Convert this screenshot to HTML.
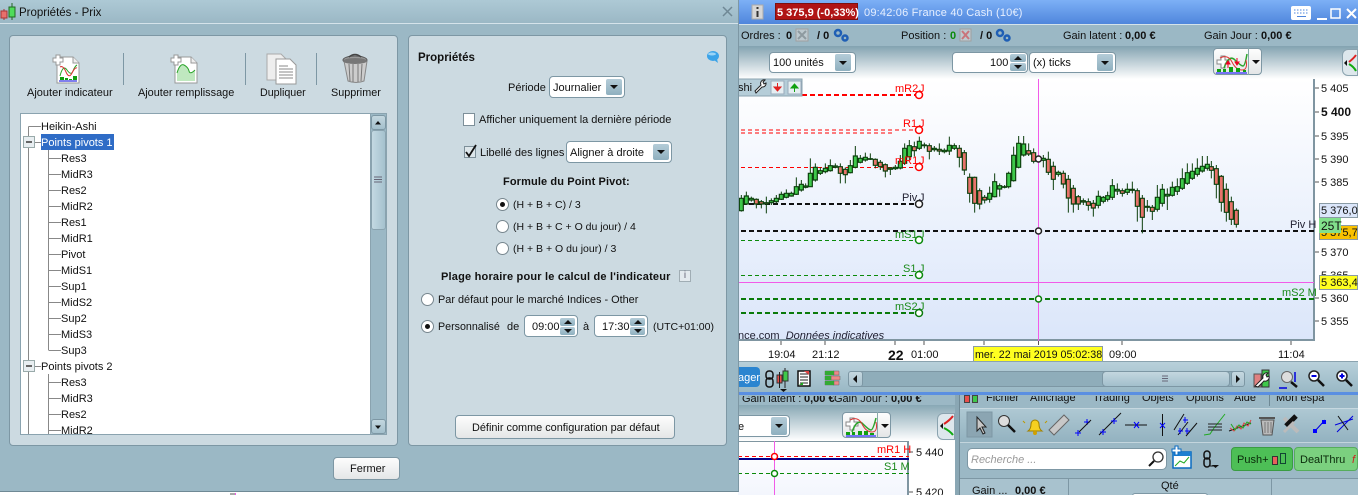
<!DOCTYPE html>
<html lang="fr"><head><meta charset="utf-8"><title>Propriétés - Prix</title>
<style>
html,body{margin:0;padding:0;background:#fff}
#r{position:relative;width:1358px;height:495px;overflow:hidden;font:11px/13px "Liberation Sans",sans-serif;color:#111}
#r div,#r span{position:absolute;box-sizing:border-box}
.t{white-space:nowrap;line-height:13px;margin-top:3px}
.b{font-weight:bold}
.panel{background:#ccdae1;border:1px solid #7d97a4;border-radius:4px}
.sel{background:#fff;border:1px solid #7d97a4;border-radius:4px}
.ab{background:linear-gradient(#b4ccd8,#8fb0bf);border-radius:2px}
.ab:after{content:"";position:absolute;left:50%;top:50%;margin:-2px 0 0 -4px;border:4px solid transparent;border-top:4px solid #111;border-bottom:0}
.ab.up:after{border-top:0;border-bottom:4px solid #111}
.cb{background:#fff;border:1px solid #7d8f99}
.ra{width:13px;height:13px;border-radius:50%;background:#fff;border:1px solid #77868e}
.ra.on:after{content:"";position:absolute;left:3px;top:3px;width:5px;height:5px;border-radius:50%;background:#111}
.btn{background:linear-gradient(#fdfdfd,#e4e6e7);border:1px solid #7d97a4;border-radius:4px;text-align:center}
svg{position:absolute;left:0;top:0}
</style></head><body><div id="r">

<!-- Right app background -->
<div style="left:738px;top:0;width:620px;height:24px;background:linear-gradient(#7db0f6,#4f86dc)"></div>
<div style="left:738px;top:24px;width:620px;height:22px;background:#9bb8c5;border-top:1px solid #d5e3ea"></div>
<div style="left:738px;top:46px;width:620px;height:33px;background:linear-gradient(#83a3b1,#fff)"></div>
<div style="left:738px;top:79px;width:577px;height:262px;background:linear-gradient(#fff,#dbe6fa);border-right:2px solid #7f95a1;border-bottom:2px solid #7f95a1"></div>
<div style="left:1315px;top:79px;width:43px;height:262px;background:#fff"></div>
<div style="left:738px;top:341px;width:620px;height:21px;background:#fff"></div>
<div style="left:738px;top:361px;width:620px;height:31px;background:linear-gradient(#b8d0da,#9ab8c5);border-top:1px solid #8aa3af"></div>
<div style="left:738px;top:392px;width:620px;height:3px;background:#5a8fe2"></div>
<div style="left:738px;top:395px;width:217px;height:10px;background:#9bb8c5"></div>
<div style="left:738px;top:405px;width:217px;height:36px;background:linear-gradient(#88a8b5,#fff)"></div>
<div style="left:738px;top:441px;width:171px;height:54px;background:linear-gradient(#fff,#f3f6fd);border-right:2px solid #7f95a1;border-top:1px solid #7f95a1"></div>
<div style="left:909px;top:441px;width:46px;height:54px;background:#fff"></div>
<div style="left:955px;top:395px;width:5px;height:100px;background:#8aa7b4;border-right:1px solid #6f8995"></div>
<div style="left:960px;top:395px;width:398px;height:13px;background:#9bb8c5"></div>
<div style="left:960px;top:408px;width:398px;height:34px;background:linear-gradient(#aec8d3,#93b2c0);border-top:1px solid #c6d8e0"></div>
<div style="left:960px;top:442px;width:398px;height:36px;background:#9bb8c5;border-top:1px solid #c3d5dd"></div>
<div style="left:960px;top:478px;width:398px;height:17px;background:#a8c2ce;border-top:1px solid #7d97a4"></div>

<div class="btn" style="left:842px;top:412px;width:49px;height:26px"></div>
<div style="left:877px;top:412px;width:1px;height:26px;background:#8aa"></div>
<div style="left:937px;top:413px;width:18px;height:27px;background:#dde7ec;border:1px solid #8aa3af;border-radius:6px 0 0 6px"></div>
<div class="btn" style="left:1213px;top:48px;width:49px;height:27px"></div><div style="left:1248px;top:48px;width:1px;height:27px;background:#8aa"></div>
<div style="left:1342px;top:49px;width:16px;height:27px;background:#dde7ec;border:1px solid #8aa3af;border-radius:6px 0 0 6px"></div>

<!-- Chart graphics -->
<svg width="1358" height="495" viewBox="0 0 1358 495">
<g fill="none">
<path d="M802 95H919" stroke="#f00" stroke-width="2" stroke-dasharray="5 3"/>
<path d="M741 130H919M741 133H895" stroke="#f00" stroke-dasharray="4 3"/>
<path d="M741 167.500H919" stroke="#f00" stroke-dasharray="4 3"/>
<path d="M741 204H919" stroke="#111" stroke-width="2" stroke-dasharray="5 3"/>
<path d="M741 240.500H919" stroke="#0a8a0a" stroke-dasharray="4 3"/>
<path d="M741 275.500H919" stroke="#0a8a0a" stroke-dasharray="4 3"/>
<path d="M741 313H919" stroke="#0a7a0a" stroke-width="2" stroke-dasharray="5 3"/>
<path d="M738 282.500H1314" stroke="#f15be8"/>
<path d="M741 299H1314" stroke="#0a7a0a" stroke-width="2" stroke-dasharray="5 3"/>
<path d="M1038.500 79V341" stroke="#f15be8"/>
<path d="M741 231H1314" stroke="#111" stroke-width="2" stroke-dasharray="5 3"/>
<g transform="translate(738 80) scale(.33333)">
<path stroke="#0d3f0d" stroke-width="3" d="M10 345V395M25 335V375M40 350V365M55 355V385M70 360V385M85 350V400M100 355V375M115 345V370M130 335V360M145 328V355M160 335V350M175 292V345M190 300V335M203 310V325M217 235V320M232 250V305M247 262V285M262 250V280M277 238V275M292 250V265M307 250V310M322 262V310M337 240V280M352 198V265M367 225V250M382 218V245M397 220V240M412 235V265M427 240V270M442 250V292M457 262V285M472 255V270M487 225V268M500 190V255M514 180V240M529 185V230M544 170V210M559 188V205M574 190V238M589 198V215M604 190V225M619 205V220M634 170V225M649 190V210M664 195V262M679 210V285M695 280V368M710 290V398M725 325V388M740 345V370M755 320V368M770 280V352M785 310V350M800 315V325M812 275V325M827 200V305M842 168V265M857 168V230M872 190V228M887 205V250"/>
<path fill="#3ec84a" stroke="#0d3f0d" stroke-width="3.500" d="M4 355h12v37h-12zM19 348h12v24h-12zM34 355h12v5h-12zM94 362h12v6h-12zM109 355h12v10h-12zM124 343h12v15h-12zM139 340h12v12h-12zM154 340h12v8h-12zM169 320h12v23h-12zM184 313h12v17h-12zM197 318h12v4h-12zM211 280h12v40h-12zM226 262h12v38h-12zM241 272h12v8h-12zM256 265h12v10h-12zM271 257h12v15h-12zM286 258h12v4h-12zM331 257h12v21h-12zM346 228h12v34h-12zM361 235h12v12h-12zM376 232h12v8h-12zM391 236h12v2h-12zM451 264h12v4h-12zM466 262h12v4h-12zM481 244h12v20h-12zM494 205h12v45h-12zM508 197h12v33h-12zM538 184h12v21h-12zM553 195h12v2h-12zM583 205h12v4h-12zM613 211h12v4h-12zM628 196h12v17h-12zM643 197h12v8h-12zM749 340h12v18h-12zM764 305h12v45h-12zM779 317h12v10h-12zM794 320h12v2h-12zM806 280h12v40h-12zM821 226h12v76h-12zM836 190h12v72h-12zM851 192h12v33h-12z"/>
<path fill="#e8736b" stroke="#0d3f0d" stroke-width="3.500" d="M49 358h12v14h-12zM64 365h12v7h-12zM79 368h12v4h-12zM301 260h12v20h-12zM316 268h12v16h-12zM406 238h12v18h-12zM421 247h12v13h-12zM436 254h12v19h-12zM523 200h12v12h-12zM568 197h12v17h-12zM598 208h12v5h-12zM658 205h12v27h-12zM673 218h12v52h-12zM689 292h12v48h-12zM704 292h12v78h-12zM719 332h12v40h-12zM734 352h12v8h-12zM866 212h12v10h-12zM881 218h12v26h-12z"/>
</g>
<g transform="translate(1040 80) scale(.33333)">
<path stroke="#0d3f0d" stroke-width="3" d="M10 225V262M25 215V285M40 245V330M55 272V290M70 272V325M85 285V398M100 315V398M115 345V390M130 355V375M145 355V392M160 360V410M175 332V385M190 348V370M203 335V365M217 297V360M232 310V345M247 325V350M262 310V345M277 305V340M292 325V425M307 345V460M322 360V395M337 375V420M352 315V395M367 312V380M382 325V390M397 305V350M412 295V345M427 265V330M442 250V315M457 250V300M472 235V290M487 228V278M502 228V272M514 243V295M529 255V355M544 285V395M559 310V425M574 350V435M589 385V443"/>
<path fill="#3ec84a" stroke="#0d3f0d" stroke-width="3.500" d="M4 235h12v6h-12zM49 277h12v6h-12zM169 349h12v27h-12zM184 352h12v12h-12zM197 347h12v11h-12zM211 317h12v35h-12zM226 328h12v5h-12zM256 328h12v9h-12zM271 328h12v3h-12zM346 352h12v36h-12zM361 328h12v42h-12zM376 343h12v5h-12zM391 322h12v24h-12zM406 320h12v14h-12zM421 296h12v29h-12zM436 278h12v32h-12zM451 274h12v21h-12zM466 265h12v18h-12zM481 259h12v14h-12zM496 253h12v12h-12zM316 379h12v3h-12z"/>
<path fill="#e8736b" stroke="#0d3f0d" stroke-width="3.500" d="M19 238h12v39h-12zM34 259h12v39h-12zM64 280h12v32h-12zM79 298h12v56h-12zM94 325h12v47h-12zM109 350h12v22h-12zM124 362h12v4h-12zM139 365h12v11h-12zM154 370h12v14h-12zM241 332h12v8h-12zM286 332h12v47h-12zM301 355h12v57h-12zM331 382h12v12h-12zM508 260h12v11h-12zM523 266h12v47h-12zM538 289h12v78h-12zM553 328h12v69h-12zM568 365h12v53h-12zM583 391h12v42h-12z"/>
</g>
<g stroke-width="1.500" fill="#fff">
<circle cx="919" cy="95" r="3.500" stroke="#f00"/><circle cx="919" cy="130" r="3.500" stroke="#f00"/><circle cx="919" cy="167" r="3.500" stroke="#f00"/>
<circle cx="919" cy="204" r="3.500" stroke="#222"/><circle cx="919" cy="240" r="3.500" stroke="#0a8a0a"/><circle cx="919" cy="275" r="3.500" stroke="#0a8a0a"/><circle cx="919" cy="313" r="3.500" stroke="#0a7a0a"/>
<circle cx="1038.500" cy="231" r="3" stroke="#222"/><circle cx="1038.500" cy="299" r="3" stroke="#0a7a0a"/><circle cx="1038.500" cy="159" r="3" stroke="#222"/>
</g>
<path d="M1315 88h4M1315 112h4M1315 136h4M1315 159h4M1315 182h4M1315 252h4M1315 298h4M1315 321h4M781 341v4M825 341v4M895 341v4M924 341v4M984 341v4M1038.500 341v4M1122 341v4M1291 341v4" stroke="#555"/>
<path d="M738 456.500H909" stroke="#f00" stroke-dasharray="4 3"/>
<path d="M738 459H909" stroke="#00008b" stroke-width="2"/>
<path d="M738 473.500H909" stroke="#0a8a0a" stroke-dasharray="4 3"/>
<path d="M774.500 441V495" stroke="#f15be8"/>
<circle cx="774.500" cy="456.500" r="3" fill="#fff" stroke="#f00" stroke-width="1.500"/>
<circle cx="774.500" cy="473.500" r="3" fill="#fff" stroke="#0a8a0a" stroke-width="1.500"/>
<path d="M909 452h4M909 492h4" stroke="#555"/>
</g>

<!-- top icons -->
<rect x="752" y="5" width="11" height="14" fill="#d6d6d6" stroke="#aaa"/><path d="M757.500 7v2M757.500 11v6" stroke="#333" stroke-width="2"/>
<rect x="1291" y="6" width="20" height="14" rx="2" fill="#fff"/><path d="M1294 10h14M1294 13h14" stroke="#4f86dc" stroke-width=".9" stroke-dasharray="1.500 1.500"/><path d="M1297 16.500h9" stroke="#4f86dc"/>
<path d="M1317 19h10" stroke="#fff" stroke-width="2"/><rect x="1331" y="9" width="9" height="9" fill="none" stroke="#fff" stroke-width="1.500"/><path d="M1347 9l9 9M1356 9l-9 9" stroke="#fff" stroke-width="2"/>
<rect x="796" y="29" width="12" height="12" fill="#bdc9cf" stroke="#a0a0a0"/><path d="M798 31l8 8M806 31l-8 8" stroke="#8e9aa0" stroke-width="2"/>
<rect x="960" y="29" width="11" height="12" fill="#bdc9cf" stroke="#a0a0a0"/><path d="M962 31l7 8M969 31l-7 8" stroke="#c9747b" stroke-width="2"/>
<g fill="#9bb8c5" stroke="#1f5fb5" stroke-width="2.500"><circle cx="838" cy="33" r="3"/><circle cx="845" cy="38" r="2.500"/><circle cx="1000" cy="33" r="3"/><circle cx="1007" cy="38" r="2.500"/></g>
<!-- tab -->
<rect x="738" y="79" width="64" height="17" fill="#b5cdd8" stroke="#8aa3af"/>
<path d="M756 93l6-6a3.500 3.500 0 0 1 4-5l-2 2 1 2 2-1a3.500 3.500 0 0 1-4 4l-6 6z" fill="#fff" stroke="#222" transform="translate(-1 -2)"/>
<rect x="771" y="81" width="13" height="13" fill="#e5eef2" stroke="#9ab"/><path d="M777.500 83v5M774 87h7l-3.500 4z" fill="#e02020" stroke="#e02020"/>
<rect x="788" y="81" width="13" height="13" fill="#e5eef2" stroke="#9ab"/><path d="M794.500 92v-5M791 88h7l-3.500-4z" fill="#10a010" stroke="#10a010"/>
</svg>

<!-- Right header text -->
<div style="left:775px;top:3px;width:83px;height:17px;background:#b01414;border:1px solid #7c1010"></div>
<span class="t b" style="left:777px;top:4px;color:#fff;font-size:11px">5 375,9 (-0,33%)</span>
<span class="t" style="left:864px;top:4px;color:#e6efff;font-size:11px;letter-spacing:.2px">09:42:06 France 40 Cash (10€)</span>
<span class="t" style="left:741px;top:27px">Ordres :</span><span class="t b" style="left:786px;top:27px">0</span><span class="t b" style="left:817px;top:27px">/ 0</span>
<span class="t" style="left:901px;top:27px">Position :</span><span class="t b" style="left:950px;top:27px;color:#0a8a0a">0</span><span class="t b" style="left:980px;top:27px">/ 0</span>
<span class="t" style="left:1063px;top:27px">Gain latent :</span><span class="t b" style="left:1125px;top:27px">0,00 €</span>
<span class="t" style="left:1204px;top:27px">Gain Jour :</span><span class="t b" style="left:1261px;top:27px">0,00 €</span>

<div class="sel" style="left:769px;top:52px;width:87px;height:21px"></div><span class="t" style="left:773px;top:54px">100 unités</span><div class="ab" style="left:835px;top:54px;width:16px;height:17px"></div>
<div class="sel" style="left:952px;top:52px;width:76px;height:21px"></div><span class="t" style="left:990px;top:54px">100</span><div class="ab up" style="left:1010px;top:54px;width:16px;height:8px"></div><div class="ab" style="left:1010px;top:63px;width:16px;height:8px"></div>
<div class="sel" style="left:1029px;top:52px;width:87px;height:21px"></div><span class="t" style="left:1033px;top:54px">(x) ticks</span><div class="ab" style="left:1097px;top:54px;width:16px;height:17px"></div>

<svg width="1358" height="495" viewBox="0 0 1358 495">
<path d="M1217 60h4v-4h4v4h4v4h-4v4h-4v-4h-4z" fill="#fff" stroke="#888"/>
<path d="M1224 68q5-14 11-8t8 6 4-12" fill="none" stroke="#2ca52c" stroke-width="1.500"/><path d="M1220 58q8-4 12 4t10 8 4-10" fill="none" stroke="#d33"/>
<path d="M1217 72h4v-3h-4zM1223 72h3v-3h-3zM1229 72h4v-5h-4zM1236 72h4v-4h-4zM1243 72h3v-2h-3z" fill="#10a010"/>
<path d="M1216 73h31" stroke="#00f"/><path d="M1228 68v-6M1226 64h4l-2-3zM1237 58v6M1235 62h4l-2 3z" fill="#e02" stroke="#e02"/>
<path d="M1252 60h8l-4 4z" fill="#111"/>
<path d="M1349 62q5-4 7-7" stroke="#d22" stroke-width="2" fill="none"/><path d="M1349 64q5 3 7 7" stroke="#1a1" stroke-width="2" fill="none"/>
<path d="M1344 63l3-3v6z" fill="#111"/>
<!-- lower-row round button arrows -->
<path d="M944 424q6-4 9-8" stroke="#d22" stroke-width="2" fill="none"/><path d="M944 428q6 3 9 7" stroke="#1a1" stroke-width="2" fill="none"/><path d="M940 426l3-3v6z" fill="#111"/>
<!-- bottom toolbar icons -->
<g fill="none" stroke="#111" stroke-width="1.500">
<rect x="766" y="371" width="7" height="8" rx="3"/><rect x="766" y="378" width="7" height="9" rx="3"/>
</g>
<rect x="777" y="375" width="5" height="8" fill="#e8504c" stroke="#333"/><path d="M779.500 372v16M785 368v20" stroke="#222"/><rect x="783" y="371" width="5" height="10" fill="#3ec84a" stroke="#333"/><path d="M780 389h7l-3.500 3z" fill="#111"/>
<rect x="798" y="371" width="12" height="15" fill="#fff" stroke="#111" stroke-width="1.500"/><path d="M800 374h8M800 377h8M800 380h8M800 383h8" stroke="#222"/><path d="M804 371h5v4z" fill="#d44"/><path d="M799 385l4-3v3z" fill="#2a2"/>
<path d="M825 371h9v4h-9zM833 371h6v4h-6zM825 376h6v4h-6zM831 376h9v4h-9zM825 381h9v4h-9zM833 381h6v4h-6z" fill="#e88" stroke="#666" stroke-width=".5"/>
<path d="M825 371h9v4h-9zM825 381h9v4h-9zM825 376h6v4h-6z" fill="#3a3"/>
<rect x="1254" y="374" width="7" height="13" fill="#e08080" stroke="#555"/><rect x="1262" y="370" width="7" height="17" fill="#3ec84a" stroke="#333"/><path d="M1255 386l8-8a4 4 0 0 1 5-5l-2 2 1 2 2-1a4 4 0 0 1-5 5l-6 6z" fill="#fff" stroke="#222"/>
<circle cx="1287" cy="377" r="5.500" fill="#ddd" stroke="#666"/><path d="M1291 382l6 5" stroke="#111" stroke-width="2.500"/><path d="M1295 372v10M1279 388h8" stroke="#00d" stroke-width="1.500"/>
<circle cx="1314" cy="376" r="5" fill="#fff" stroke="#222" stroke-width="1.500"/><path d="M1311.500 376h5" stroke="#00d" stroke-width="2"/><path d="M1318 380l6 6" stroke="#111" stroke-width="2.500"/>
<circle cx="1342" cy="376" r="5" fill="#fff" stroke="#222" stroke-width="1.500"/><path d="M1339.500 376h5M1342 373.500v5" stroke="#00d" stroke-width="2"/><path d="M1346 380l6 6" stroke="#111" stroke-width="2.500"/>
<!-- lower indicator -->
<path d="M846 422h4v-4h4v4h4v4h-4v4h-4v-4h-4z" fill="#fff" stroke="#888"/>
<path d="M852 432q5-14 11-8t8 6 5-12" fill="none" stroke="#2ca52c" stroke-width="1.500"/><path d="M850 420q8-4 12 4t10 8 4-10" fill="none" stroke="#d33"/>
<path d="M846 435h4v-3h-4zM852 435h3v-3h-3zM858 435h4v-4h-4zM864 435h4v-4h-4zM870 435h4v-2h-4z" fill="#10a010"/><path d="M846 436h30" stroke="#00f"/>
<path d="M881 424h8l-4 4z" fill="#111"/>
<!-- right-panel icons -->
<rect x="967" y="412" width="25" height="25" fill="#8ba5b2" stroke="#7d97a4"/><path d="M977 417l0 14 3-3 3 6 2-1-3-6h4z" fill="#c8c8c8" stroke="#222"/>
<circle cx="1004" cy="421" r="5.500" fill="#ddd" stroke="#333"/><path d="M1008 425l7 7" stroke="#111" stroke-width="2.500"/>
<path d="M1028 431q3-2 3-7a4 4 0 0 1 8 0q0 5 3 7z" fill="#f5d020" stroke="#a08000"/><circle cx="1035" cy="433" r="2" fill="#d0a000"/><path d="M1023 421l2 2M1047 421l-2 2" stroke="#b90"/>
<path d="M1049 430l15-15 5 5-15 15z" fill="#c8c8c8" stroke="#666"/>
<path d="M1075 433h6M1078 430v6M1084 422h6M1087 419v6" stroke="#00f" fill="none"/><path d="M1079 432l12-12" stroke="#111"/>
<path d="M1099 435l22-22" stroke="#111"/><path d="M1100 432h6M1103 429v6M1111 421h6M1114 418v6" stroke="#00f"/>
<path d="M1125 425h22" stroke="#111"/><path d="M1134 422l5 6M1139 422l-5 6" stroke="#00f"/>
<path d="M1162.500 414v22" stroke="#111"/><path d="M1160 423l5 5M1165 423l-5 5" stroke="#00f"/>
<path d="M1184 414l-10 16M1188 422l-10 13M1197 423l-11 13" stroke="#111"/><path d="M1178 431h5M1180 428v6M1185 431h5M1187 428v6M1183 420h5M1185 417v6" stroke="#00f"/>
<path d="M1204 435l6-1 4-6 11-14" stroke="#2a2" fill="none"/><path d="M1208 424h14M1208 427h14M1208 430h14" stroke="#222"/>
<path d="M1229 431l22-8" stroke="#111"/><path d="M1230 428l4 3 3-5 4 3 3-6 4 3 3-6" stroke="#d44" fill="none"/><path d="M1231 424l4 6 4-5 4 3 4-6 4 2" stroke="#2a2" fill="none"/>
<path d="M1261 420h13l-2 15h-9z" fill="#bbb" stroke="#555"/><path d="M1259 418h16" stroke="#555" stroke-width="2"/><path d="M1265 422v11M1268 422v11M1271 422v11" stroke="#777"/>
<path d="M1284 418l14 14" stroke="#bbb" stroke-width="4"/><path d="M1296 416l-10 10" stroke="#111" stroke-width="5"/><path d="M1284 432l10-10" stroke="#bbb" stroke-width="3"/>
<path d="M1315 431l10-11" stroke="#00d"/><rect x="1313" y="429" width="4" height="4" fill="#00f"/><rect x="1322" y="420" width="4" height="4" fill="#00f"/>
<path d="M1337 432l16-16M1335 425l18-6" stroke="#00d"/><path d="M1338 416l10 14" stroke="#111"/>
</svg>

<span class="t" style="left:742px;top:390px;clip-path:inset(3px 0 0 0)">Gain latent :</span><span class="t b" style="left:804px;top:390px;clip-path:inset(3px 0 0 0)">0,00 €</span><span class="t" style="left:834px;top:390px;clip-path:inset(3px 0 0 0)">Gain Jour :</span><span class="t b" style="left:891px;top:390px;clip-path:inset(3px 0 0 0)">0,00 €</span>
<div class="sel" style="left:738px;top:415px;width:52px;height:22px;border-left:0;border-radius:0 4px 4px 0"></div><span class="t" style="left:738px;top:418px">e</span><div class="ab" style="left:771px;top:417px;width:16px;height:18px"></div>

<span class="t" style="left:986px;top:389px;clip-path:inset(4px 0 0 0)">Fichier</span><span class="t" style="left:1030px;top:389px;clip-path:inset(4px 0 0 0)">Affichage</span><span class="t" style="left:1093px;top:389px;clip-path:inset(4px 0 0 0)">Trading</span><span class="t" style="left:1142px;top:389px;clip-path:inset(4px 0 0 0)">Objets</span><span class="t" style="left:1186px;top:389px;clip-path:inset(4px 0 0 0)">Options</span><span class="t" style="left:1234px;top:389px;clip-path:inset(4px 0 0 0)">Aide</span><span class="t" style="left:1276px;top:389px;clip-path:inset(4px 0 0 0)">Mon espa</span>
<div style="left:1269px;top:395px;width:1px;height:11px;background:#6f8995"></div>
<div style="left:964px;top:395px;width:6px;height:8px;background:#e8504c;border:1px solid #444"></div><div style="left:972px;top:395px;width:6px;height:8px;background:#3ec84a;border:1px solid #444"></div>

<div class="sel" style="left:967px;top:448px;width:200px;height:22px;border-radius:5px"></div>
<span class="t" style="left:971px;top:451px;color:#999;font-style:italic">Recherche ...</span>
<svg width="1358" height="495" viewBox="0 0 1358 495">
<circle cx="1158" cy="457" r="5" fill="#fff" stroke="#333" stroke-width="1.300"/><path d="M1154 461l-5 5" stroke="#111" stroke-width="2"/>
<rect x="1173" y="452" width="18" height="16" fill="#fff" stroke="#0a6ac0" stroke-width="1.500"/><rect x="1173" y="452" width="18" height="4" fill="#1d7fd0"/><path d="M1175 466l5-5 4 2 5-6" stroke="#2a2" fill="none"/><path d="M1172 449h3v-3h3v3h3v3h-3v3h-3v-3h-3z" fill="#fff" stroke="#0a6ac0"/>
<g fill="none" stroke="#111" stroke-width="1.500"><rect x="1204" y="451" width="6" height="8" rx="3"/><rect x="1204" y="458" width="6" height="9" rx="3"/></g><path d="M1212 465h7l-3.500 3z" fill="#111"/><path d="M1210 466h7" stroke="#111"/>
</svg>
<div style="left:1231px;top:447px;width:62px;height:24px;background:#4dbf56;border:1px solid #3a9c43;border-radius:4px"></div>
<span class="t" style="left:1237px;top:451px;color:#0a2a0a">Push+</span>
<div style="left:1272px;top:456px;width:6px;height:9px;background:#e8605c;border:1px solid #333"></div><div style="left:1280px;top:453px;width:6px;height:11px;background:#4dbf56;border:1px solid #143"></div>
<div style="left:1294px;top:447px;width:64px;height:24px;background:#7bd07f;border:1px solid #56ad5c;border-radius:4px"></div>
<span class="t" style="left:1300px;top:451px;color:#0a2a0a">DealThru</span>
<span class="t" style="left:1352px;top:451px;color:#c22;font-style:italic">f</span>

<span class="t" style="left:972px;top:482px">Gain ...</span><span class="t b" style="left:1015px;top:482px">0,00 €</span>
<span class="t" style="left:1161px;top:477px">Qté</span>
<div style="left:1068px;top:478px;width:1px;height:17px;background:#7d97a4"></div><div style="left:1271px;top:478px;width:1px;height:17px;background:#7d97a4"></div>
<div class="sel" style="left:1132px;top:493px;width:76px;height:6px"></div>

<!-- Chart labels -->
<span class="t" style="left:738px;top:79px">shi</span>
<span class="t" style="left:895px;top:80px;color:#f00">mR2</span><span class="t" style="left:903px;top:115px;color:#f00">R1</span><span class="t" style="left:895px;top:152px;color:#f00">mR1</span>
<span class="t" style="left:902px;top:189px;color:#223">Piv</span><span class="t" style="left:895px;top:226px;color:#1a8a1a">mS1</span><span class="t" style="left:903px;top:260px;color:#1a8a1a">S1</span><span class="t" style="left:895px;top:298px;color:#1a8a1a">mS2</span>
<span class="t" style="left:919px;top:80px;color:#f00">J</span><span class="t" style="left:919px;top:115px;color:#f00">J</span><span class="t" style="left:919px;top:152px;color:#f00">J</span><span class="t" style="left:919px;top:189px;color:#223">J</span><span class="t" style="left:919px;top:226px;color:#1a8a1a">J</span><span class="t" style="left:919px;top:260px;color:#1a8a1a">J</span><span class="t" style="left:919px;top:298px;color:#1a8a1a">J</span>
<span class="t" style="left:1290px;top:216px;color:#223">Piv H</span><span class="t" style="left:1282px;top:284px;color:#1a8a1a">mS2 M</span>
<span class="t" style="left:738px;top:327px;color:#223">nce.com&nbsp; <i>Données indicatives</i></span>

<span class="t" style="left:1321px;top:80px">5 405</span><span class="t b" style="left:1321px;top:103px;font-size:12px">5 400</span><span class="t" style="left:1321px;top:128px">5 395</span><span class="t" style="left:1321px;top:151px">5 390</span><span class="t" style="left:1321px;top:174px">5 385</span><span class="t" style="left:1321px;top:244px">5 370</span><span class="t" style="left:1321px;top:267px">5 365</span><span class="t" style="left:1321px;top:290px">5 360</span><span class="t" style="left:1321px;top:313px">5 355</span>

<div style="left:1319px;top:203px;width:39px;height:15px;background:#dbe6fa;border:1px solid #8a9ba5"></div><span class="t" style="left:1321px;top:202px">5 376,0</span>
<div style="left:1319px;top:225px;width:39px;height:15px;background:#f8c000;border:1px solid #8a9ba5"></div><span class="t" style="left:1321px;top:224px">5 375,7</span>
<div style="left:1319px;top:218px;width:22px;height:15px;background:#82e08c"></div><span class="t" style="left:1321px;top:217px;font-size:12px">25T</span>
<div style="left:1319px;top:275px;width:39px;height:15px;background:#ffff20;border:1px solid #8a9ba5"></div><span class="t" style="left:1321px;top:274px">5 363,4</span>

<span class="t" style="left:768px;top:346px">19:04</span><span class="t" style="left:812px;top:346px">21:12</span><span class="t b" style="left:888px;top:344px;font-size:14px;line-height:16px">22</span><span class="t" style="left:911px;top:346px">01:00</span>
<div style="left:973px;top:346px;width:130px;height:15px;background:#ffff20;border-left:1px solid #8a9ba5;border-top:1px solid #8a9ba5;border-right:1px solid #8a9ba5"></div>
<span class="t" style="left:975px;top:346px;font-size:10.700px">mer. 22 mai 2019 05:02:38</span>
<span class="t" style="left:1109px;top:346px">09:00</span><span class="t" style="left:1278px;top:346px">11:04</span>

<div style="left:738px;top:367px;width:22px;height:20px;background:#2b85d0;border-radius:0 4px 4px 0"></div><span class="t" style="left:736px;top:369px;color:#fff;width:24px;overflow:hidden;text-align:right">ager</span>
<div style="left:848px;top:371px;width:397px;height:16px;background:#8fadba;border:1px solid #7d97a4;border-radius:4px"></div>
<div style="left:848px;top:371px;width:15px;height:16px;background:linear-gradient(#c5d8e0,#a8c2ce);border:1px solid #7d97a4;border-radius:3px"></div>
<div style="left:1102px;top:371px;width:128px;height:16px;background:linear-gradient(#c3d7df,#a3bfcc);border:1px solid #7d97a4;border-radius:4px"></div>
<div style="left:1231px;top:371px;width:14px;height:16px;background:linear-gradient(#c5d8e0,#a8c2ce);border:1px solid #7d97a4;border-radius:3px"></div>
<svg width="1358" height="495" viewBox="0 0 1358 495"><path d="M853 379l4-4v8zM1240 379l-4-4v8z" fill="#111"/><path d="M1162 376h6M1162 378.500h6M1162 381h6" stroke="#667"/></svg>

<span class="t" style="left:877px;top:441px;color:#f00">mR1 H</span><span class="t" style="left:884px;top:458px;color:#1a8a1a">S1 M</span>
<span class="t" style="left:916px;top:444px">5 440</span><span class="t" style="left:916px;top:484px">5 420</span>

<!-- DIALOG -->
<div style="left:0;top:0;width:739px;height:492px;background:#9bb8c5;border-right:1px solid #7d97a4;border-bottom:1px solid #6f8995"></div>
<div style="left:0;top:0;width:738px;height:24px;background:linear-gradient(#adc9d5,#9bb8c5);border-bottom:1px solid #d5e3ea"></div>
<span class="t" style="left:19px;top:4px;font-size:11.500px">Propriétés - Prix</span>
<svg width="20" height="22" viewBox="0 0 20 22" style="left:0;top:0">
<path d="M4 9v11" stroke="#a33"/><rect x="1" y="11" width="6" height="7" fill="#e8706c" stroke="#a33"/><path d="M12 3v17" stroke="#262"/><rect x="9" y="7" width="6" height="10" fill="#4fdc5a" stroke="#262"/></svg>
<svg width="12" height="12" viewBox="0 0 12 12" style="left:722px;top:6px"><path d="M1 1l9 9M10 1l-9 9" stroke="#6f8895" stroke-width="1.500"/></svg>

<div class="panel" style="left:9px;top:35px;width:389px;height:411px"></div>
<div class="panel" style="left:408px;top:35px;width:319px;height:411px"></div>

<svg width="400" height="100" viewBox="0 0 400 100" style="left:0;top:0">
<path d="M123.500 53v32M245.500 53v32M316.500 53v32" stroke="#7d97a4"/>
<path d="M57 57h16l6 6v20H57z" fill="#fff" stroke="#999"/><path d="M73 57v6h6" fill="#eee" stroke="#999"/>
<path d="M53 58h3v-3h4v3h3v4h-3v3h-4v-3h-3z" fill="#fff" stroke="#999"/>
<path d="M60 76q3-12 7-6t6 1 4-6" fill="none" stroke="#2ca52c"/><path d="M60 67q3-2 6 5t6 1 5-5" fill="none" stroke="#d33"/>
<path d="M60 80h4v-3h-4zM65 80h3v-2h-3zM69 80h3v-1h-3zM73 80h4v-4h-4z" fill="#10a010"/><path d="M59 81h18" stroke="#00d"/>
<path d="M175 57h16l6 6v20h-22z" fill="#fff" stroke="#999"/><path d="M191 57v6h6" fill="#eee" stroke="#999"/>
<path d="M171 58h3v-3h4v3h3v4h-3v3h-4v-3h-3z" fill="#fff" stroke="#999"/>
<path d="M177 73q3-10 7-8t5 6 6-1v11h-18z" fill="#bfe8bf"/><path d="M177 73q3-10 7-8t5 6 6-1" fill="none" stroke="#2ca52c"/>
<path d="M267 54h14l5 5v21h-19z" fill="#eee" stroke="#aaa"/><path d="M276 59h14l6 6v19h-20z" fill="#fff" stroke="#999"/>
<path d="M279 69h14M279 72h14M279 75h14M279 78h14M279 66h9" stroke="#888"/>
<ellipse cx="355" cy="60" rx="12" ry="4" fill="#999" stroke="#555"/><path d="M349 57q6-5 12 0" fill="none" stroke="#444" stroke-width="1.500"/>
<path d="M344 61h23l-3 20q-8 3-16 0z" fill="#ccc" stroke="#888"/><path d="M349 64l1 17M353 64v18M358 64v18M362 64l-1 17" stroke="#777"/>
<ellipse cx="355" cy="61" rx="12" ry="3" fill="#777"/>
</svg>
<span class="t" style="left:27px;top:84px">Ajouter indicateur</span><span class="t" style="left:138px;top:84px;font-size:10.900px">Ajouter remplissage</span><span class="t" style="left:260px;top:84px;font-size:10.700px">Dupliquer</span><span class="t" style="left:331px;top:84px;font-size:10.800px">Supprimer</span>

<!-- Tree -->
<div style="left:20px;top:113px;width:367px;height:322px;background:#fff;border:1px solid #8aa3af;overflow:hidden"></div>
<svg width="400" height="440" viewBox="0 0 400 440" style="left:0;top:0">
<path d="M28.500 126.500V434M28.500 126.500H41M35 142.500H41M35 366.500H41M48.500 150V350.500M48.500 374V434" fill="none" stroke="#888"/>
<path d="M49 158.500h12M49 174.500h12M49 190.500h12M49 206.500h12M49 222.500h12M49 238.500h12M49 254.500h12M49 270.500h12M49 286.500h12M49 302.500h12M49 318.500h12M49 334.500h12M49 350.500h12M49 382.500h12M49 398.500h12M49 414.500h12M49 430.500h12" stroke="#888"/>
<rect x="23.500" y="136.500" width="11" height="11" fill="#e8eef1" stroke="#9aa"/><path d="M26 142h6" stroke="#666" stroke-width="2"/>
<rect x="23.500" y="360.500" width="11" height="11" fill="#e8eef1" stroke="#9aa"/><path d="M26 366h6" stroke="#666" stroke-width="2"/>
</svg>
<div style="left:41px;top:134px;width:73px;height:16px;background:#2f6cc6"></div>
<span class="t" style="left:41px;top:118px">Heikin-Ashi</span><span class="t" style="left:41px;top:134px;color:#fff">Points pivots 1</span>
<span class="t" style="left:61px;top:150px">Res3</span><span class="t" style="left:61px;top:166px">MidR3</span><span class="t" style="left:61px;top:182px">Res2</span><span class="t" style="left:61px;top:198px">MidR2</span><span class="t" style="left:61px;top:214px">Res1</span><span class="t" style="left:61px;top:230px">MidR1</span><span class="t" style="left:61px;top:246px">Pivot</span><span class="t" style="left:61px;top:262px">MidS1</span><span class="t" style="left:61px;top:278px">Sup1</span><span class="t" style="left:61px;top:294px">MidS2</span><span class="t" style="left:61px;top:310px">Sup2</span><span class="t" style="left:61px;top:326px">MidS3</span><span class="t" style="left:61px;top:342px">Sup3</span>
<span class="t" style="left:41px;top:358px">Points pivots 2</span>
<span class="t" style="left:61px;top:374px">Res3</span><span class="t" style="left:61px;top:390px">MidR3</span><span class="t" style="left:61px;top:406px">Res2</span><span class="t" style="left:61px;top:422px;height:10px;overflow:hidden">MidR2</span>

<div style="left:370px;top:114px;width:16px;height:320px;background:#9bb8c5;border-left:1px solid #8aa3af"></div>
<div style="left:371px;top:115px;width:15px;height:15px;background:linear-gradient(#c3d7df,#a3bfcc);border:1px solid #7d97a4;border-radius:3px"></div>
<svg width="10" height="6" viewBox="0 0 10 6" style="left:373px;top:120px"><path d="M2 4.500h6L5 1z" fill="#111"/></svg>
<div style="left:371px;top:130px;width:15px;height:100px;background:linear-gradient(90deg,#c3d9e2,#a5c1ce);border:1px solid #8aa3af;border-radius:3px"></div>
<svg width="10" height="8" viewBox="0 0 10 8" style="left:373px;top:176px"><path d="M1 1h8M1 3.500h8M1 6h8" stroke="#667"/></svg>
<div style="left:371px;top:419px;width:15px;height:15px;background:linear-gradient(#c3d7df,#a3bfcc);border:1px solid #7d97a4;border-radius:3px"></div>
<svg width="10" height="6" viewBox="0 0 10 6" style="left:373px;top:424px"><path d="M2 1.500h6L5 5z" fill="#111"/></svg>

<!-- Right panel content -->
<span class="t b" style="left:418px;top:49px;font-size:11.500px">Propriétés</span>
<svg width="14" height="14" viewBox="0 0 14 14" style="left:706px;top:50px"><ellipse cx="7" cy="6" rx="6" ry="5" fill="#3ba3e8"/><path d="M8 10l4 3-1-4z" fill="#3ba3e8"/><ellipse cx="6" cy="4" rx="4" ry="1.500" fill="#9ad4f7"/></svg>
<span class="t" style="left:508px;top:79px">Période</span>
<div class="sel" style="left:549px;top:76px;width:76px;height:22px"></div><span class="t" style="left:553px;top:79px">Journalier</span><div class="ab" style="left:606px;top:79px;width:16px;height:16px"></div>
<div class="cb" style="left:463px;top:113px;width:12px;height:13px"></div><span class="t" style="left:479px;top:111px">Afficher uniquement la dernière période</span>
<div class="cb" style="left:464px;top:146px;width:12px;height:12px;background:#dde6ea"></div>
<svg width="14" height="14" viewBox="0 0 14 14" style="left:464px;top:144px"><path d="M2 8l3 4 7-11" fill="none" stroke="#111" stroke-width="1.800"/></svg>
<span class="t" style="left:480px;top:144px">Libellé des lignes</span>
<div class="sel" style="left:566px;top:141px;width:106px;height:22px"></div><span class="t" style="left:570px;top:144px">Aligner à droite</span><div class="ab" style="left:653px;top:144px;width:16px;height:16px"></div>
<span class="t b" style="left:503px;top:173px;letter-spacing:.12px">Formule du Point Pivot:</span>
<div class="ra on" style="left:496px;top:198px"></div><span class="t" style="left:513px;top:196px;font-size:10.500px">(H + B + C) / 3</span>
<div class="ra" style="left:496px;top:220px"></div><span class="t" style="left:513px;top:218px;font-size:10.500px">(H + B + C + O du jour) / 4</span>
<div class="ra" style="left:496px;top:242px"></div><span class="t" style="left:513px;top:240px;font-size:10.500px">(H + B + O du jour) / 3</span>
<span class="t b" style="left:441px;top:268px;letter-spacing:.2px">Plage horaire pour le calcul de l'indicateur</span>
<div style="left:679px;top:270px;width:12px;height:12px;background:#e3eaee;border:1px solid #a0adb4;text-align:center;line-height:10px;font-size:10px;color:#667">i</div>
<div class="ra" style="left:421px;top:293px"></div><span class="t" style="left:438px;top:291px;font-size:10.900px">Par défaut pour le marché Indices - Other</span>
<div class="ra on" style="left:421px;top:320px"></div><span class="t" style="left:438px;top:318px;font-size:10.700px">Personnalisé</span><span class="t" style="left:507px;top:318px">de</span>
<div class="sel" style="left:524px;top:315px;width:54px;height:22px"></div><span class="t" style="left:532px;top:318px">09:00</span><div class="ab up" style="left:560px;top:318px;width:15px;height:8px"></div><div class="ab" style="left:560px;top:327px;width:15px;height:8px"></div>
<span class="t" style="left:583px;top:318px">à</span>
<div class="sel" style="left:594px;top:315px;width:54px;height:22px"></div><span class="t" style="left:602px;top:318px">17:30</span><div class="ab up" style="left:630px;top:318px;width:15px;height:8px"></div><div class="ab" style="left:630px;top:327px;width:15px;height:8px"></div>
<span class="t" style="left:653px;top:318px;font-size:10.500px">(UTC+01:00)</span>
<div class="btn" style="left:455px;top:415px;width:220px;height:24px"></div><span class="t" style="left:472px;top:419px;font-size:10.900px">Définir comme configuration par défaut</span>
<div class="btn" style="left:333px;top:457px;width:67px;height:23px"></div><span class="t" style="left:350px;top:460px">Fermer</span>

<!-- Under dialog -->
<div style="left:230px;top:493px;width:5px;height:2px;background:#aaa"></div><div style="left:235px;top:493px;width:1px;height:2px;background:#f15be8"></div>
</div></body></html>
